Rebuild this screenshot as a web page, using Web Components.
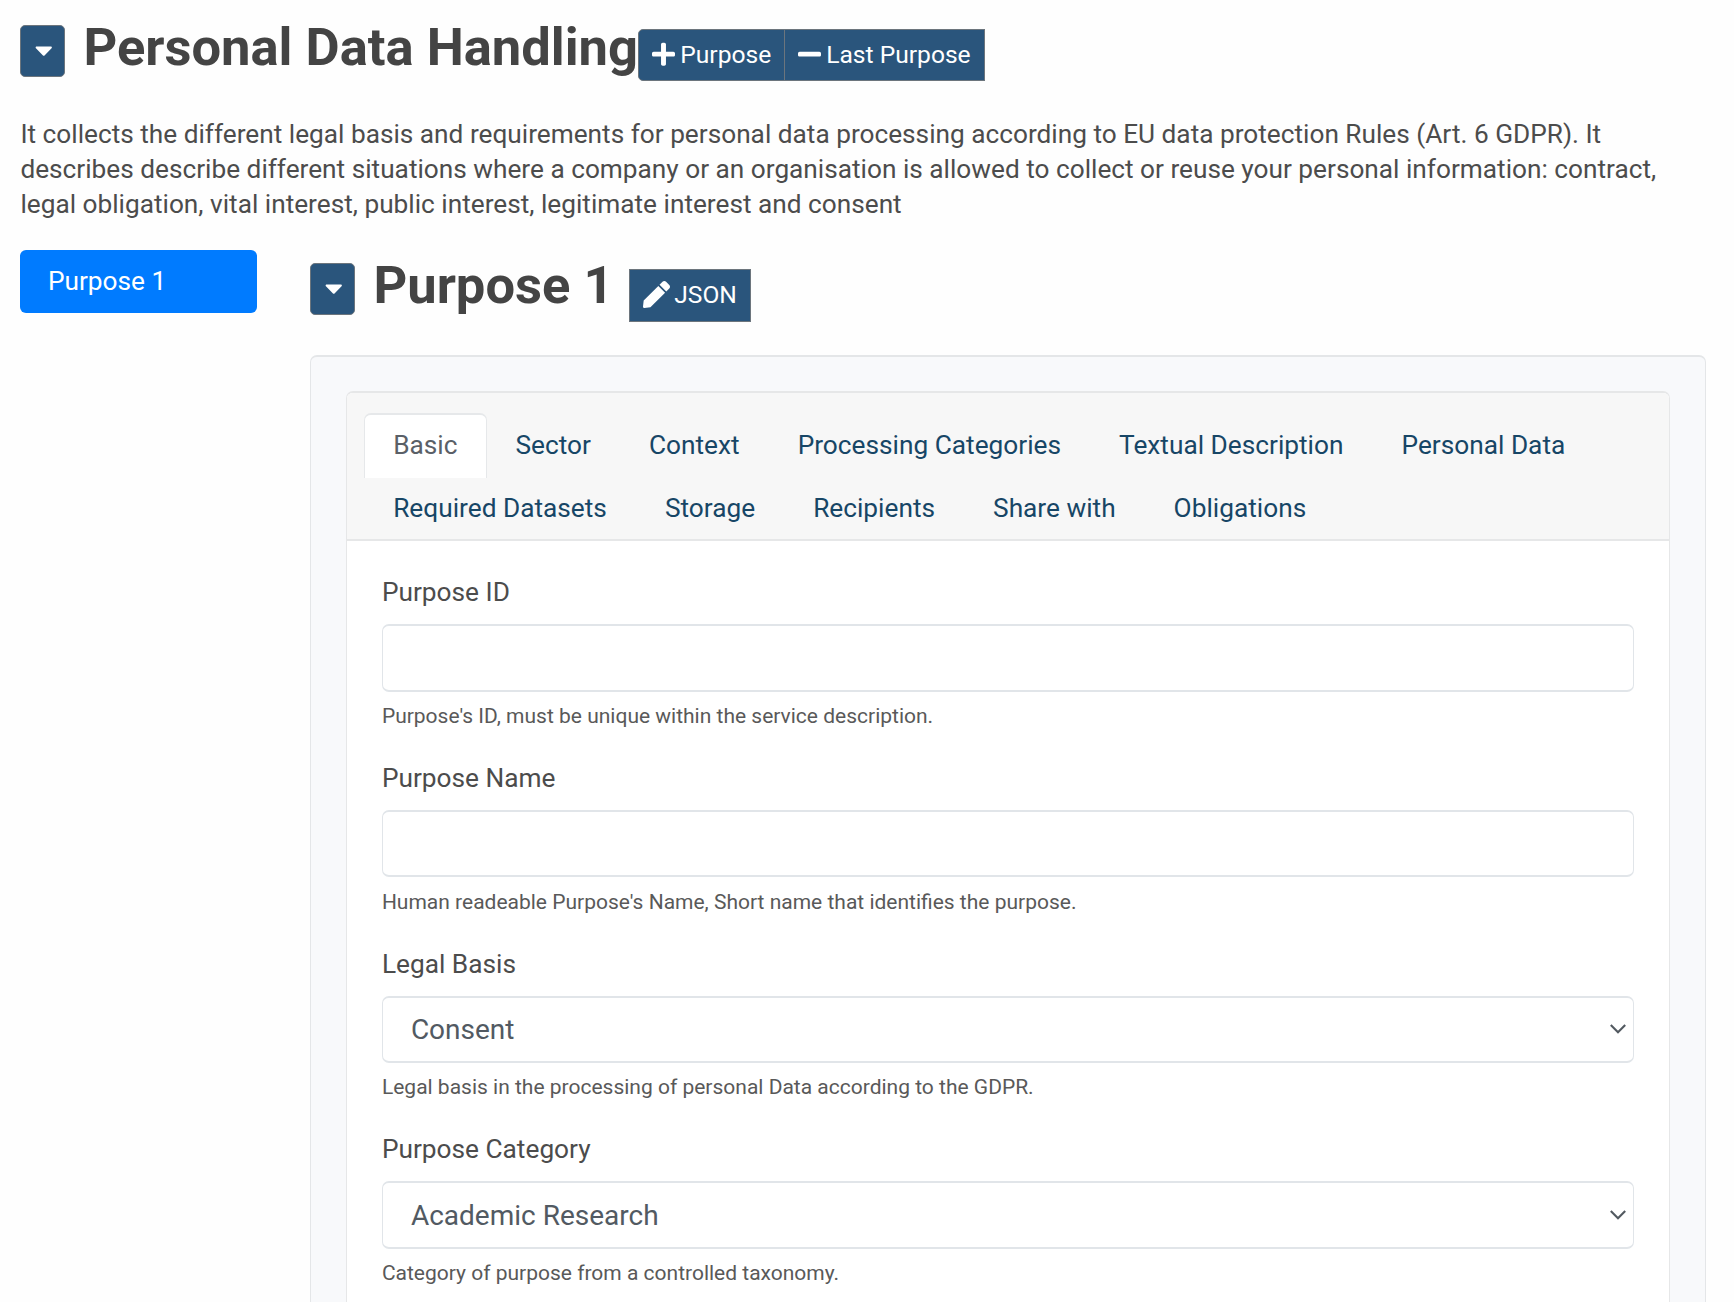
<!DOCTYPE html>
<html lang="en">
<head>
<meta charset="utf-8">
<title>Personal Data Handling</title>
<style>
  html, body { margin: 0; height: 1302px; overflow: hidden; background: #fefefe; }
  body { font: 26.25px/35px Roboto, "Liberation Sans", sans-serif; color: #4c4c4c; }
</style>
</head>
<body>
<purpose-page></purpose-page>
<script>
const define = (name, html, setup) => customElements.define(name, class extends HTMLElement {
  connectedCallback() {
    if (this.shadowRoot) return;
    this.attachShadow({ mode: 'open' }).innerHTML = html;
    if (setup) setup(this, this.shadowRoot);
  }
});

const ICONS = {
  caret: [320, 'M31.3 192h257.3c17.8 0 26.7 21.5 14.1 34.1L174.1 354.8c-7.8 7.8-20.5 7.8-28.3 0L17.2 226.1C4.6 213.5 13.5 192 31.3 192z'],
  plus: [448, 'M416 208H272V64c0-17.67-14.33-32-32-32h-32c-17.67 0-32 14.33-32 32v144H32c-17.67 0-32 14.33-32 32v32c0 17.67 14.33 32 32 32h144v144c0 17.67 14.33 32 32 32h32c17.67 0 32-14.33 32-32V304h144c17.67 0 32-14.33 32-32v-32c0-17.67-14.33-32-32-32z'],
  minus: [448, 'M416 208H32c-17.67 0-32 14.33-32 32v32c0 17.67 14.33 32 32 32h384c17.67 0 32-14.33 32-32v-32c0-17.67-14.33-32-32-32z'],
  pen: [512, 'M290.74 93.24l128.02 128.02-277.99 277.99-114.14 12.6C11.35 513.54-1.56 500.62.14 485.34l12.7-114.22 277.9-277.88zm207.2-19.06l-60.11-60.11c-18.75-18.75-49.16-18.75-67.92 0l-56.55 56.55 128.02 128.02 56.55-56.55c18.75-18.76 18.75-49.16 0-67.91z']
};

define('app-icon', `<style>
  :host { display: block; flex: none; }
  svg { display: block; fill: currentColor; }
</style><svg><path/></svg>`, (el, root) => {
  const [w, d] = ICONS[el.getAttribute('name')];
  const size = +(el.getAttribute('size') || 28);
  const svg = root.querySelector('svg');
  svg.setAttribute('viewBox', `0 0 ${w} 512`);
  svg.setAttribute('width', w * size / 512);
  svg.setAttribute('height', size);
  root.querySelector('path').setAttribute('d', d);
});

define('app-button', `<style>
  :host { display: inline-flex; flex: none; align-items: center; gap: var(--gap, 5px); box-sizing: border-box;
    height: 52px; padding: 0 0 0 13.2px; border: 1px solid #6c757d; background: #2a557c; color: #fff;
    font-size: 24.6px; line-height: 36px; white-space: nowrap; cursor: pointer; }
  app-icon { margin-bottom: 3px; }
  span { margin-bottom: 1.6px; }
</style><div></div><span><slot></slot></span>`, (el, root) => {
  const icon = document.createElement('app-icon');
  icon.setAttribute('name', el.getAttribute('icon'));
  if (el.hasAttribute('icon-size')) icon.setAttribute('size', el.getAttribute('icon-size'));
  root.querySelector('div').replaceWith(icon);
});

define('section-heading', `<style>
  :host { display: flex; align-items: flex-start; }
  .toggle { width: 45px; border-radius: 5px; margin-top: var(--toggle-top); }
  h1 { margin: 0 0 0 18px; font-size: 52.5px; font-weight: 700; line-height: 63px; color: #444; white-space: nowrap; }
  .actions { display: flex; margin: var(--actions-top) 0 0 var(--actions-left); }
</style>
<app-button class="toggle" icon="caret"></app-button><h1><slot></slot></h1>
<div class="actions"><slot name="actions"></slot></div>`);

define('side-pill', `<style>
  :host { display: block; box-sizing: border-box; width: 237px; height: 63px; padding: 14px 27.5px; border-radius: 6px;
    background: #007bff; color: #fff; }
</style><slot></slot>`);

define('tab-item', `<style>
  :host { display: block; box-sizing: border-box; height: 65px; margin-bottom: -2.2px; padding: 12.9px 28px 0;
    border: solid transparent; border-width: 2px 1px 0; border-radius: 7px 7px 0 0; color: #174666; white-space: nowrap; }
  :host([active]) { background: #fff; border-color: #e6e8ea; color: #5a6067; }
</style><slot></slot>`);

define('tab-card', `<style>
  :host { display: block; box-sizing: border-box; height: 100%; border: solid #e6e7e8; border-width: 2px 1.5px 0; border-radius: 7px 7px 0 0;
    background: #fff; overflow: hidden; }
  header { display: flex; flex-wrap: wrap; box-sizing: border-box; height: 148px; padding: 20px 17px 0 17.3px; background: #f7f7f7;
    border-bottom: 2px solid #e6e7e8; }
  main { padding: 34px 35px 0; }
</style><header><slot name="tabs"></slot></header><main><slot></slot></main>`);

define('form-field', `<style>
  :host { display: block; margin-bottom: 31px; }
  label { display: block; margin-bottom: 14.2px; }
  .control { display: flex; align-items: center; justify-content: space-between; box-sizing: border-box; width: 100%;
    height: 67.2px; padding: 0 7.5px 0 28px; border: solid #e1e5e9; border-width: 2px 1.5px; border-radius: 7px; background: #fff;
    font: 28px/42px Roboto, "Liberation Sans", sans-serif; color: #525a62; outline: 0; }
  .control span { margin-top: 1px; }
  small { display: block; margin-top: 10.3px; font-size: 21px; line-height: 28px; color: #595959; }
  svg { display: block; flex: none; }
</style><label></label><div class="slot"></div><small><slot></slot></small>`, (el, root) => {
  root.querySelector('label').textContent = el.getAttribute('label');
  const box = root.querySelector('.slot');
  const value = el.getAttribute('value');
  box.innerHTML = value === null ? '<input class="control">' :
    `<div class="control" role="combobox"><span>${value}</span><svg width="16" height="12" viewBox="0 0 16 12" fill="none" stroke="#525960" stroke-width="2.1"><path d="M.8 2.1 8 9.3 15.2 2.1"/></svg></div>`;
});

define('purpose-page', `<style>
  :host { display: flex; flex-direction: column; height: 1302px; padding: 16px 0 0 20.4px; box-sizing: border-box; }
  .top { --toggle-top: 9.4px; --actions-top: 13.4px; --actions-left: 0; height: 63px; }
  p { margin: 38.3px 0 0; width: 1660px; height: 105px; font-size: 26.235px; }
  .columns { display: flex; flex: 1; min-height: 0; margin-top: 27.9px; gap: 53px; }
  .content { display: flex; flex-direction: column; width: 1395.6px; padding-top: 3.8px; }
  .sub { --toggle-top: 9.5px; --actions-top: 15.3px; --actions-left: 15.5px; height: 63px; }
  .panel { flex: 1; min-height: 0; box-sizing: border-box; margin-top: 38.3px; padding: 34px 34.5px 0; border: solid #e4e6e8;
    border-width: 2px 1.5px 0; border-radius: 7px 7px 0 0; background: #f8f9fb; }
  .first { width: 147px; border-radius: 5px 0 0 5px; }
  .last { width: 201px; margin-left: -1px; }
  .json { width: 122px; height: 53px; --gap: 4px; }
</style>
<section-heading class="top">Personal Data Handling
  <app-button slot="actions" class="first" icon="plus" icon-size="26.3">Purpose</app-button>
  <app-button slot="actions" class="last" icon="minus" icon-size="26.3">Last Purpose</app-button>
</section-heading>
<p>It collects the different legal basis and requirements for personal data processing according to EU data protection Rules (Art. 6 GDPR). It describes describe different situations where a company or an organisation is allowed to collect or reuse your personal information: contract, legal obligation, vital interest, public interest, legitimate interest and consent</p>
<div class="columns">
  <nav><side-pill>Purpose 1</side-pill></nav>
  <div class="content">
    <section-heading class="sub">Purpose 1
      <app-button slot="actions" class="json" icon="pen" icon-size="27">JSON</app-button>
    </section-heading>
    <div class="panel">
      <tab-card>
        <tab-item slot="tabs" active>Basic</tab-item>
        <tab-item slot="tabs">Sector</tab-item>
        <tab-item slot="tabs">Context</tab-item>
        <tab-item slot="tabs">Processing Categories</tab-item>
        <tab-item slot="tabs">Textual Description</tab-item>
        <tab-item slot="tabs">Personal Data</tab-item>
        <tab-item slot="tabs">Required Datasets</tab-item>
        <tab-item slot="tabs">Storage</tab-item>
        <tab-item slot="tabs">Recipients</tab-item>
        <tab-item slot="tabs">Share with</tab-item>
        <tab-item slot="tabs">Obligations</tab-item>
        <form-field label="Purpose ID">Purpose's ID, must be unique within the service description.</form-field>
        <form-field label="Purpose Name">Human readeable Purpose's Name, Short name that identifies the purpose.</form-field>
        <form-field label="Legal Basis" value="Consent">Legal basis in the processing of personal Data according to the GDPR.</form-field>
        <form-field label="Purpose Category" value="Academic Research">Category of purpose from a controlled taxonomy.</form-field>
      </tab-card>
    </div>
  </div>
</div>`);
</script>
</body>
</html>
